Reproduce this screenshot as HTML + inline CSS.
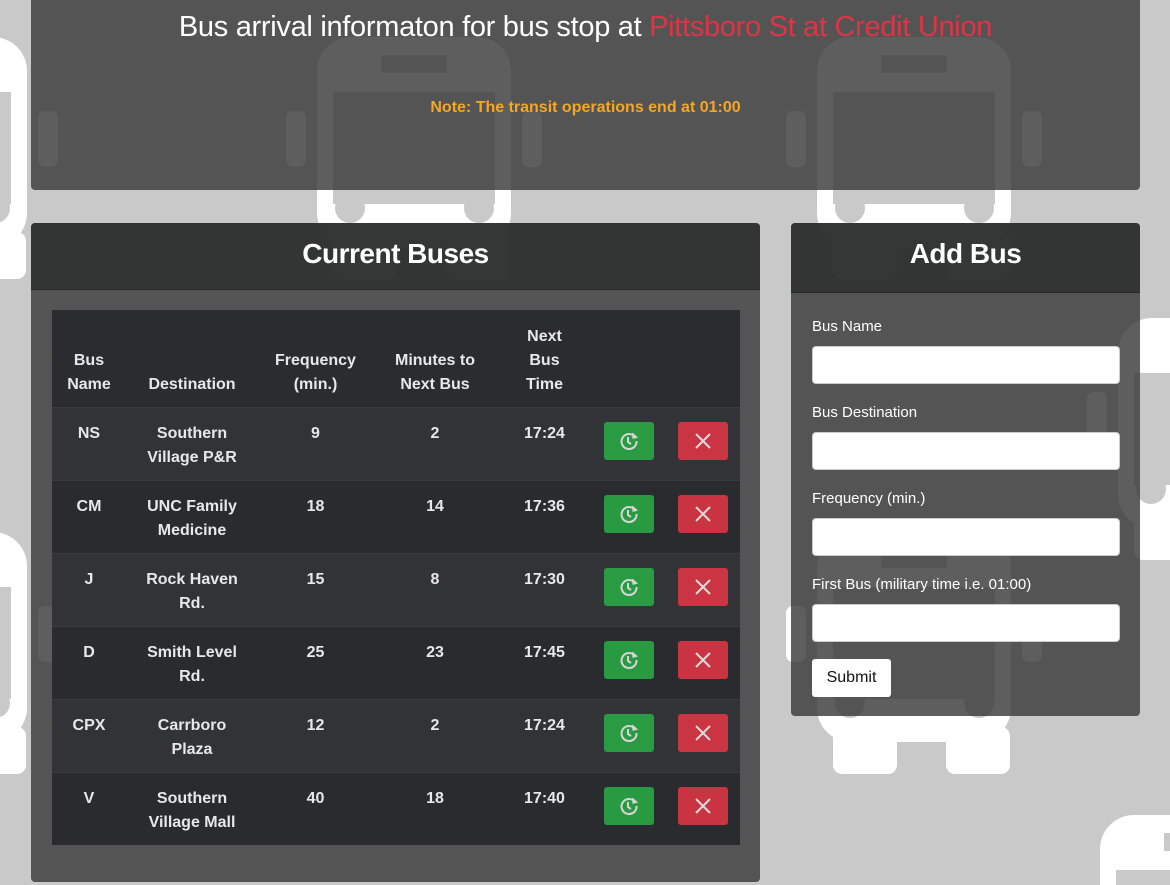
<!DOCTYPE html>
<html><head><meta charset="utf-8">
<style>
*{box-sizing:border-box;margin:0;padding:0}
html,body{width:1170px;height:885px;overflow:hidden}
body{background:#c8c9c8;font-family:"Liberation Sans",Helvetica,Arial,sans-serif;position:relative}
.bg{position:absolute;left:0;top:0}
.panel{position:absolute;background:rgba(58,59,58,0.82);border-radius:4px;overflow:hidden}
.top{left:31px;top:-5px;width:1109px;height:195px;color:#fff;text-align:center}
.top h1{font-size:29px;font-weight:normal;margin-top:16px;letter-spacing:-0.3px}
.top h1 span{color:#dc3545}
.top .note{color:#f5a623;font-weight:bold;font-size:16px;margin-top:55px}
.hdr{background:rgba(40,41,41,0.75);color:#fff;font-size:28px;font-weight:bold;text-align:center;line-height:62px;height:67px;border-bottom:1px solid rgba(0,0,0,0.2);letter-spacing:-0.5px}
table{position:absolute;left:21px;top:87px;width:688px;border-collapse:collapse;table-layout:fixed;color:#e8e8e8;font-size:16px;font-weight:bold}
th{height:97px;vertical-align:bottom;padding-bottom:10px;line-height:24px;background:#2b2c30;text-align:center}
td{height:73px;vertical-align:top;padding-top:14px;line-height:24px;text-align:center;border-top:1px solid #3a3b3e}
tr.o td{background:#323337}
tr.e td{background:#2a2b2f}
.b{display:inline-block;width:50px;height:38px;border-radius:3px;vertical-align:top;margin-top:0;position:relative}
.g{background:#28a745;opacity:.9}
.r{background:#dc3545;opacity:.9}
.b svg{position:absolute;left:15px;top:9px}
label{display:block;color:#fff;font-size:15px;line-height:18px;height:18px;margin:0 0 10px 0}
.inp{width:308px;height:38px;background:#fff;border-radius:4px;border:1px solid #ccc;margin-bottom:20px}
.sub{width:79px;height:38px;background:#fff;border-radius:3px;font-size:16px;line-height:38px;text-align:center;color:#111}
</style></head><body>
<svg class="bg" width="1170" height="885">
<defs>
<g id="bus">
<rect x="-31" y="74" width="20" height="56" rx="7" fill="#fff"/>
<rect x="205" y="74" width="20" height="56" rx="7" fill="#fff"/>
<rect x="0" y="0" width="194" height="210" rx="34" fill="#fff"/>
<rect x="64" y="18" width="66" height="18" fill="#c8c9c8"/>
<rect x="16" y="55" width="162" height="112" fill="#c8c9c8"/>
<circle cx="33" cy="171" r="15" fill="#c8c9c8"/>
<circle cx="162" cy="171" r="15" fill="#c8c9c8"/>
<rect x="16" y="195" width="64" height="47" rx="9" fill="#fff"/>
<rect x="129" y="195" width="64" height="47" rx="9" fill="#fff"/>
</g>
</defs>
<use href="#bus" x="317" y="37"/>
<use href="#bus" x="817" y="37"/>
<use href="#bus" x="317" y="532"/>
<use href="#bus" x="817" y="532"/>
<use href="#bus" x="-167" y="37"/>
<use href="#bus" x="-167" y="532"/>
<use href="#bus" x="1118" y="318"/>
<use href="#bus" x="1100" y="815"/>
</svg>

<div class="panel top">
<h1>Bus arrival informaton for bus stop at <span>Pittsboro St at Credit Union</span></h1>
<div class="note">Note: The transit operations end at 01:00</div>
</div>

<div class="panel" style="left:31px;top:223px;width:729px;height:659px">
<div class="hdr">Current Buses</div>
<table>
<colgroup><col style="width:74px"><col style="width:132px"><col style="width:115px"><col style="width:124px"><col style="width:95px"><col style="width:74px"><col style="width:74px"></colgroup>
<tr><th>Bus<br>Name</th><th>Destination</th><th>Frequency<br>(min.)</th><th>Minutes to<br>Next Bus</th><th>Next<br>Bus<br>Time</th><th></th><th></th></tr>
<tr class="o"><td>NS</td><td>Southern<br>Village P&amp;R</td><td>9</td><td>2</td><td>17:24</td><td><span class="b g"><svg width="20" height="20" viewBox="0 0 20 20" fill="none" stroke="#e8e8e8" stroke-width="2"><path d="M16 6A7.5 7.5 0 1 0 17.5 10"/><path d="M13 2.5L17 6 13.5 7" fill="#e8e8e8"/><path d="M9 6v5l3 2"/></svg></span></td><td><span class="b r"><svg width="20" height="20" viewBox="0 0 20 20" stroke="#eee" stroke-width="2"><path d="M3 3L17 17M17 3L3 17"/></svg></span></td></tr>
<tr class="e"><td>CM</td><td>UNC Family<br>Medicine</td><td>18</td><td>14</td><td>17:36</td><td><span class="b g"><svg width="20" height="20" viewBox="0 0 20 20" fill="none" stroke="#e8e8e8" stroke-width="2"><path d="M16 6A7.5 7.5 0 1 0 17.5 10"/><path d="M13 2.5L17 6 13.5 7" fill="#e8e8e8"/><path d="M9 6v5l3 2"/></svg></span></td><td><span class="b r"><svg width="20" height="20" viewBox="0 0 20 20" stroke="#eee" stroke-width="2"><path d="M3 3L17 17M17 3L3 17"/></svg></span></td></tr>
<tr class="o"><td>J</td><td>Rock Haven<br>Rd.</td><td>15</td><td>8</td><td>17:30</td><td><span class="b g"><svg width="20" height="20" viewBox="0 0 20 20" fill="none" stroke="#e8e8e8" stroke-width="2"><path d="M16 6A7.5 7.5 0 1 0 17.5 10"/><path d="M13 2.5L17 6 13.5 7" fill="#e8e8e8"/><path d="M9 6v5l3 2"/></svg></span></td><td><span class="b r"><svg width="20" height="20" viewBox="0 0 20 20" stroke="#eee" stroke-width="2"><path d="M3 3L17 17M17 3L3 17"/></svg></span></td></tr>
<tr class="e"><td>D</td><td>Smith Level<br>Rd.</td><td>25</td><td>23</td><td>17:45</td><td><span class="b g"><svg width="20" height="20" viewBox="0 0 20 20" fill="none" stroke="#e8e8e8" stroke-width="2"><path d="M16 6A7.5 7.5 0 1 0 17.5 10"/><path d="M13 2.5L17 6 13.5 7" fill="#e8e8e8"/><path d="M9 6v5l3 2"/></svg></span></td><td><span class="b r"><svg width="20" height="20" viewBox="0 0 20 20" stroke="#eee" stroke-width="2"><path d="M3 3L17 17M17 3L3 17"/></svg></span></td></tr>
<tr class="o"><td>CPX</td><td>Carrboro<br>Plaza</td><td>12</td><td>2</td><td>17:24</td><td><span class="b g"><svg width="20" height="20" viewBox="0 0 20 20" fill="none" stroke="#e8e8e8" stroke-width="2"><path d="M16 6A7.5 7.5 0 1 0 17.5 10"/><path d="M13 2.5L17 6 13.5 7" fill="#e8e8e8"/><path d="M9 6v5l3 2"/></svg></span></td><td><span class="b r"><svg width="20" height="20" viewBox="0 0 20 20" stroke="#eee" stroke-width="2"><path d="M3 3L17 17M17 3L3 17"/></svg></span></td></tr>
<tr class="e"><td>V</td><td>Southern<br>Village Mall</td><td>40</td><td>18</td><td>17:40</td><td><span class="b g"><svg width="20" height="20" viewBox="0 0 20 20" fill="none" stroke="#e8e8e8" stroke-width="2"><path d="M16 6A7.5 7.5 0 1 0 17.5 10"/><path d="M13 2.5L17 6 13.5 7" fill="#e8e8e8"/><path d="M9 6v5l3 2"/></svg></span></td><td><span class="b r"><svg width="20" height="20" viewBox="0 0 20 20" stroke="#eee" stroke-width="2"><path d="M3 3L17 17M17 3L3 17"/></svg></span></td></tr>
</table>
</div>

<div class="panel" style="left:791px;top:223px;width:349px;height:493px">
<div class="hdr" style="height:70px;line-height:62px">Add Bus</div>
<div style="padding:25px 0 0 21px">
<label>Bus Name</label><div class="inp"></div>
<label>Bus Destination</label><div class="inp"></div>
<label>Frequency (min.)</label><div class="inp"></div>
<label>First Bus (military time i.e. 01:00)</label><div class="inp" style="margin-bottom:17px"></div>
<div class="sub">Submit</div>
</div>
</div>
</body></html>
